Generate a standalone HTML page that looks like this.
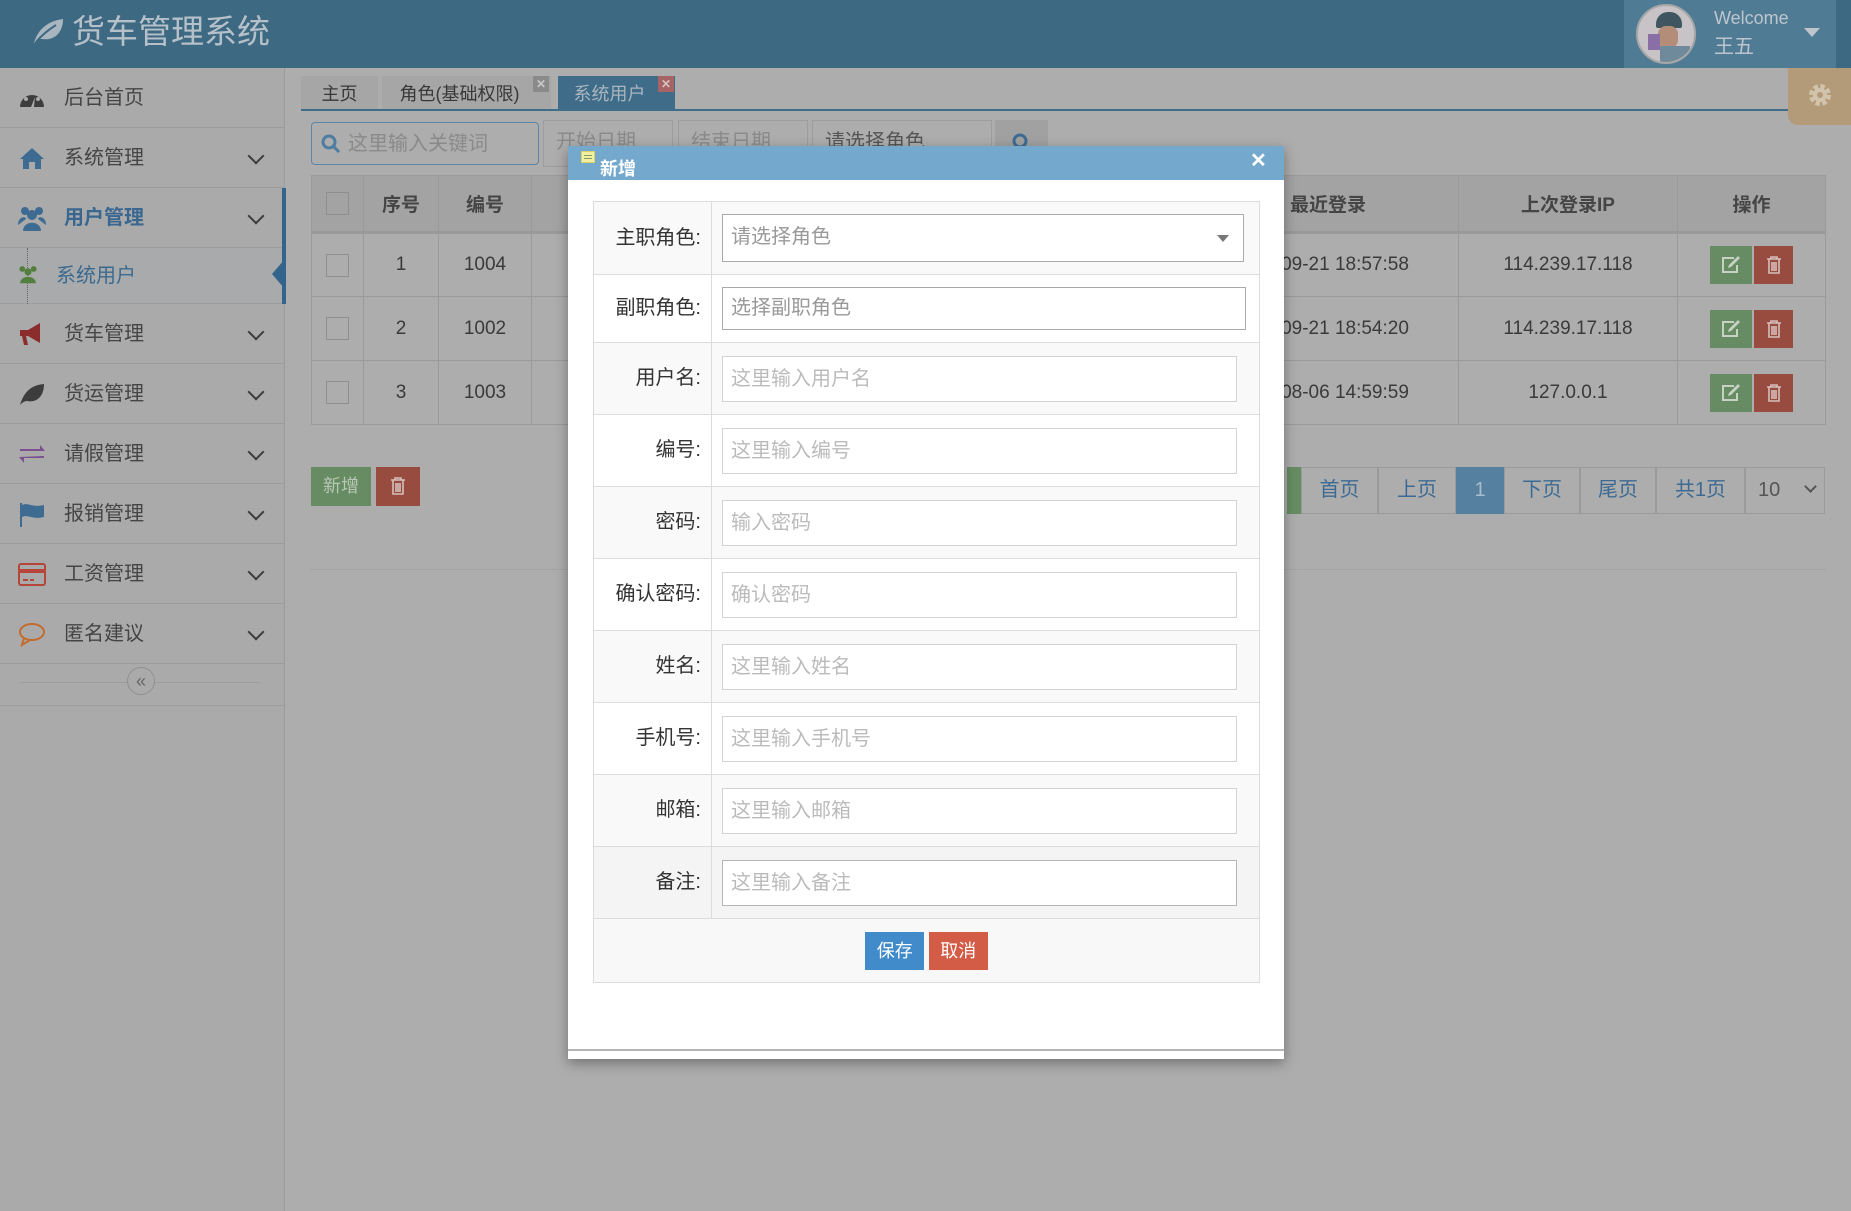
<!DOCTYPE html>
<html><head><meta charset="utf-8"><style>
*{box-sizing:border-box;margin:0;padding:0}
body{width:1851px;height:1211px;position:relative;overflow:hidden;background:#adadad;font-family:"Liberation Sans","Noto Sans CJK SC",sans-serif;color:#3c3c3c}
.a{position:absolute}
.hdr{left:0;top:0;width:1851px;height:68px;background:#3d6983}
.side{left:0;top:68px;width:285px;height:1143px;background:#aaaaaa;border-right:1px solid #9c9c9c}
.si{position:absolute;left:0;width:284px;height:60px;border-bottom:1px solid #9d9d9d;font-size:20px;line-height:60px;color:#454545}
.si .t{position:absolute;left:64px}
.chev{position:absolute;left:250px;top:22px;width:12px;height:12px;border-right:2px solid #3d3d3d;border-bottom:2px solid #3d3d3d;transform:rotate(45deg)}
.ic{position:absolute;left:18px;top:17px;width:28px;height:26px}
.tab{position:absolute;top:76px;height:34px;background:#a6a6a6;font-size:18px;line-height:36px;text-align:center;color:#383838}
.inp{position:absolute;border:1px solid #9d9d9d;background:#adadad;font-size:20px;color:#8a8a8a;line-height:42px;padding-left:12px;overflow:hidden;white-space:nowrap}
table.g{position:absolute;left:311px;top:175px;border-collapse:collapse;font-size:19px;color:#3a3a3a}
table.g td{border:1px solid #9a9a9a;text-align:center;height:64px}
table.g tr.h td{height:57px;background:#a3a3a3;font-weight:bold;color:#454545;border-bottom:3px solid #999}
.cb{display:inline-block;width:23px;height:23px;border:1px solid #8f8f8f;vertical-align:middle}
.bg{display:inline-block;width:42px;height:38px;background:#678c63;vertical-align:middle;position:relative}
.br{display:inline-block;width:39px;height:38px;background:#984b3f;vertical-align:middle;margin-left:2px;position:relative}
.bg svg,.br svg{position:absolute;left:50%;top:50%;transform:translate(-50%,-50%)}
.pg{position:absolute;top:467px;height:47px;border:1px solid #9a9a9a;font-size:20px;line-height:45px;text-align:center;color:#3c6a93}
.modal{left:568px;top:146px;width:716px;height:913px;background:#fff;box-shadow:0 4px 12px rgba(0,0,0,.35)}
.mh{left:0;top:0;width:716px;height:34px;background:#74a9cd;color:#fff;font-weight:bold;font-size:18px}
.frm{position:absolute;left:25px;top:55px;width:667px;border-collapse:collapse}
.frm td{border:1px solid #dcdcdc}
.frm td.l{width:118px;text-align:right;padding-right:10px;font-size:20px;color:#333;padding-bottom:6px}
.frm .fi{border:1px solid #d3d3d3;height:46px;font-size:20px;color:#bbb;line-height:44px;padding-left:8px;width:515px;margin-left:10px;background:#fff}
</style></head><body>
<div class="a hdr">
 <svg class="a" style="left:30px;top:15px" width="36" height="32" viewBox="0 0 36 32"><path d="M4 28 C8 14 18 6 33 4 C33 18 24 26 12 24 C9 24 7 25 4 28 Z" fill="#a9b6bf"/><path d="M6 27 C12 20 18 15 26 10" stroke="#3d6983" stroke-width="2" fill="none"/></svg>
 <div class="a" style="left:72px;top:10px;font-size:33px;color:#b5c0c8;line-height:44px">货车管理系统</div>
 <div class="a" style="left:1624px;top:0;width:212px;height:68px;background:#507b95">
  <div class="a" style="left:12px;top:4px;width:60px;height:60px;border-radius:50%;background:#c7c3c6;border:2px solid #a7a7a7;overflow:hidden"><div class="a" style="left:18px;top:6px;width:26px;height:16px;background:#3f5660;border-radius:12px 12px 2px 2px"></div><div class="a" style="left:20px;top:20px;width:20px;height:22px;background:#b48d78;border-radius:8px"></div><div class="a" style="left:10px;top:28px;width:12px;height:16px;background:#8a6fa6"></div><div class="a" style="left:22px;top:40px;width:30px;height:20px;background:#6f8a9a"></div></div>
  <div class="a" style="left:90px;top:8px;font-size:18px;color:#bdc6cc">Welcome</div>
  <div class="a" style="left:90px;top:30px;font-size:20px;color:#bdc6cc">王五</div>
  <div class="a" style="left:180px;top:28px;width:0;height:0;border-left:8px solid transparent;border-right:8px solid transparent;border-top:9px solid #bdc6cc"></div>
 </div>
</div>
<div class="a side">
 <div class="si" style="top:0"><svg class="ic" viewBox="0 0 28 26"><path d="M2 22 A12 12 0 1 1 26 22 Z" fill="#3d3d3d"/><circle cx="8" cy="14" r="2" fill="#aaa"/><circle cx="14" cy="8" r="2" fill="#aaa"/><circle cx="20" cy="14" r="2" fill="#aaa"/><path d="M13 22 L17 12 L16 22Z" fill="#aaa"/></svg><span class="t">后台首页</span></div>
 <div class="si" style="top:60px"><svg class="ic" viewBox="0 0 28 26"><path d="M14 3 L2 14 L5 14 L5 24 L11 24 L11 17 L17 17 L17 24 L23 24 L23 14 L26 14Z" fill="#3e6b92"/></svg><span class="t">系统管理</span><div class="chev"></div></div>
 <div class="si" style="top:120px"><svg class="ic" viewBox="0 0 28 26"><circle cx="7" cy="6" r="4" fill="#3e6b92"/><circle cx="21" cy="6" r="4" fill="#3e6b92"/><circle cx="14" cy="10" r="5" fill="#3e6b92"/><path d="M5 26 C5 15 23 15 23 26Z" fill="#3e6b92"/><path d="M0 20 C0 11 8 11 8 14Z M28 20 C28 11 20 11 20 14Z" fill="#3e6b92"/></svg><span class="t" style="font-weight:bold;color:#3a6790">用户管理</span><div class="chev"></div></div>
 <div class="si" style="top:180px;height:56px;line-height:56px;background:#a9aaac"><div class="a" style="left:27px;top:0;height:56px;border-left:1px dotted #666"></div><svg class="ic" style="left:18px;top:16px;width:20px;height:20px" viewBox="0 0 28 26"><circle cx="6" cy="6" r="4" fill="#527f3e"/><circle cx="22" cy="6" r="4" fill="#527f3e"/><circle cx="14" cy="10" r="5" fill="#527f3e"/><path d="M3 26 C3 14 25 14 25 26Z" fill="#527f3e"/></svg><span class="t" style="left:56px;color:#3b6a8f">系统用户</span></div>
 <div class="a" style="left:282px;top:120px;width:4px;height:116px;background:#33648c"></div>
 <div class="a" style="left:272px;top:192px;width:0;height:0;border-top:14px solid transparent;border-bottom:14px solid transparent;border-right:12px solid #33648c"></div>
 <div class="si" style="top:236px"><svg class="ic" viewBox="0 0 28 26"><path d="M2 9 L10 9 L22 2 L22 22 L10 15 L8 15 L10 24 L6 24 L4 15 L2 15Z" fill="#8c2d2d"/></svg><span class="t">货车管理</span><div class="chev"></div></div>
 <div class="si" style="top:296px"><svg class="ic" viewBox="0 0 28 26"><path d="M2 24 C6 10 14 4 26 3 C26 16 18 22 9 20 C6 20 4 22 2 24Z" fill="#3d3d3d"/></svg><span class="t">货运管理</span><div class="chev"></div></div>
 <div class="si" style="top:356px"><svg class="ic" viewBox="0 0 28 26"><path d="M2 8 L22 8 L22 4 L27 10 L2 10Z M26 17 L6 17 L6 22 L1 16 L26 15Z" fill="#7d4f91"/></svg><span class="t">请假管理</span><div class="chev"></div></div>
 <div class="si" style="top:416px"><svg class="ic" viewBox="0 0 28 26"><rect x="2" y="2" width="2" height="24" fill="#3e6b92"/><path d="M4 4 C10 1 14 7 26 4 L26 16 C14 19 10 13 4 16Z" fill="#3e6b92"/></svg><span class="t">报销管理</span><div class="chev"></div></div>
 <div class="si" style="top:476px"><svg class="ic" viewBox="0 0 28 26"><rect x="1" y="3" width="26" height="21" rx="2" fill="none" stroke="#b6463a" stroke-width="2"/><rect x="1" y="8" width="26" height="4" fill="#b6463a"/><rect x="5" y="18" width="5" height="2" fill="#b6463a"/><rect x="12" y="18" width="4" height="2" fill="#b6463a"/></svg><span class="t">工资管理</span><div class="chev"></div></div>
 <div class="si" style="top:536px"><svg class="ic" viewBox="0 0 28 26"><ellipse cx="14" cy="11" rx="12" ry="8" fill="none" stroke="#c46b2e" stroke-width="2"/><path d="M6 17 L4 24 L12 19" fill="none" stroke="#c46b2e" stroke-width="2"/></svg><span class="t">匿名建议</span><div class="chev"></div></div>
 <div class="a" style="left:0;top:596px;width:284px;height:42px;border-bottom:1px solid #9d9d9d"><div class="a" style="left:20px;top:18px;width:240px;border-top:1px solid #9b9b9b"></div><div class="a" style="left:127px;top:3px;width:28px;height:28px;border-radius:50%;border:1px solid #8f8f8f;background:#aaa;text-align:center;line-height:26px;font-size:18px;color:#666">«</div></div>
</div>
<div class="tab" style="left:301px;width:77px">主页</div>
<div class="tab" style="left:382px;width:169px;padding-right:14px">角色(基础权限)<div class="a" style="left:151px;top:0;width:16px;height:16px;background:#8a8a8a;color:#c8c8c8;font-size:12px;line-height:16px;font-weight:bold">✕</div></div>
<div class="tab" style="left:558px;width:117px;background:#3f6c89;color:#aab6bf;padding-right:14px">系统用户<div class="a" style="left:100px;top:0;width:16px;height:16px;background:#a76465;color:#d6c0c0;font-size:12px;line-height:16px;font-weight:bold">✕</div></div>
<div class="a" style="left:301px;top:109px;width:1488px;height:2px;background:#3f6c89"></div>
<div class="a" style="left:1788px;top:68px;width:63px;height:57px;background:#b39a78;border-radius:0 0 0 10px"><svg class="a" style="left:19px;top:14px" width="26" height="26" viewBox="0 0 26 26"><circle cx="13" cy="13" r="8" fill="none" stroke="#d2c3ad" stroke-width="6" stroke-dasharray="4 2.3"/><circle cx="13" cy="13" r="7" fill="#d2c3ad"/><circle cx="13" cy="13" r="3" fill="#b39a78"/></svg></div>
<div class="inp" style="left:311px;top:122px;width:228px;height:43px;border:1px solid #5d86a6;border-radius:4px;padding-left:36px"><svg class="a" style="left:9px;top:11px" width="20" height="20" viewBox="0 0 20 20"><circle cx="8" cy="8" r="6" fill="none" stroke="#4f7da0" stroke-width="3"/><path d="M12 12 L18 18" stroke="#4f7da0" stroke-width="3"/></svg>这里输入关键词</div>
<div class="inp" style="left:543px;top:120px;width:130px;height:47px">开始日期</div>
<div class="inp" style="left:678px;top:120px;width:130px;height:47px">结束日期</div>
<div class="inp" style="left:812px;top:120px;width:180px;height:47px;color:#555">请选择角色</div>
<div class="a" style="left:995px;top:120px;width:53px;height:47px;background:#a1a1a1"><svg class="a" style="left:16px;top:12px" width="20" height="20" viewBox="0 0 20 20"><circle cx="9" cy="9" r="6" fill="none" stroke="#3e6b92" stroke-width="3"/></svg></div>
<table class="g">
<tr class="h"><td style="width:52px"><span class="cb"></span></td><td style="width:75px">序号</td><td style="width:93px">编号</td><td style="width:700px"></td><td style="width:227px;text-align:left;padding-left:58px">最近登录</td><td style="width:219px">上次登录IP</td><td style="width:148px">操作</td></tr>
<tr><td><span class="cb"></span></td><td>1</td><td>1004</td><td></td><td>09-21 18:57:58</td><td>114.239.17.118</td><td><span class="bg"><svg width="22" height="20" viewBox="0 0 22 20"><path d="M14 3 H3 V17 H17 V10" fill="none" stroke="#c6d2c2" stroke-width="2"/><path d="M8 13 L9 10 L18 1 L20 3 L11 12Z" fill="#c6d2c2"/></svg></span><span class="br"><svg width="16" height="20" viewBox="0 0 16 20"><path d="M1 4 H15 M5 4 V2 H11 V4 M3 4 V18 H13 V4 M6 7 V16 M8 7 V16 M10 7 V16" fill="none" stroke="#d7c0bb" stroke-width="1.6"/></svg></span></td></tr>
<tr><td><span class="cb"></span></td><td>2</td><td>1002</td><td></td><td>09-21 18:54:20</td><td>114.239.17.118</td><td><span class="bg"><svg width="22" height="20" viewBox="0 0 22 20"><path d="M14 3 H3 V17 H17 V10" fill="none" stroke="#c6d2c2" stroke-width="2"/><path d="M8 13 L9 10 L18 1 L20 3 L11 12Z" fill="#c6d2c2"/></svg></span><span class="br"><svg width="16" height="20" viewBox="0 0 16 20"><path d="M1 4 H15 M5 4 V2 H11 V4 M3 4 V18 H13 V4 M6 7 V16 M8 7 V16 M10 7 V16" fill="none" stroke="#d7c0bb" stroke-width="1.6"/></svg></span></td></tr>
<tr><td><span class="cb"></span></td><td>3</td><td>1003</td><td></td><td>08-06 14:59:59</td><td>127.0.0.1</td><td><span class="bg"><svg width="22" height="20" viewBox="0 0 22 20"><path d="M14 3 H3 V17 H17 V10" fill="none" stroke="#c6d2c2" stroke-width="2"/><path d="M8 13 L9 10 L18 1 L20 3 L11 12Z" fill="#c6d2c2"/></svg></span><span class="br"><svg width="16" height="20" viewBox="0 0 16 20"><path d="M1 4 H15 M5 4 V2 H11 V4 M3 4 V18 H13 V4 M6 7 V16 M8 7 V16 M10 7 V16" fill="none" stroke="#d7c0bb" stroke-width="1.6"/></svg></span></td></tr>
</table>
<div class="a" style="left:311px;top:467px;width:60px;height:39px;background:#678c63;color:#b9c8b5;font-size:18px;line-height:39px;text-align:center">新增</div>
<div class="a" style="left:376px;top:467px;width:44px;height:39px;background:#984b3f"><svg class="a" style="left:14px;top:9px" width="16" height="20" viewBox="0 0 16 20"><path d="M1 4 H15 M5 4 V2 H11 V4 M3 4 V18 H13 V4 M6 7 V16 M8 7 V16 M10 7 V16" fill="none" stroke="#d7c0bb" stroke-width="1.6"/></svg></div>
<div class="a" style="left:311px;top:569px;width:1514px;border-top:1px dotted #999"></div>
<div class="a" style="left:1287px;top:467px;width:14px;height:47px;background:#678c63"></div>
<div class="pg" style="left:1301px;width:77px">首页</div>
<div class="pg" style="left:1378px;width:78px">上页</div>
<div class="pg" style="left:1456px;width:48px;background:#5580a0;color:#a9bccb;border-color:#5580a0">1</div>
<div class="pg" style="left:1504px;width:76px">下页</div>
<div class="pg" style="left:1580px;width:76px">尾页</div>
<div class="pg" style="left:1656px;width:89px">共1页</div>
<div class="pg" style="left:1745px;width:80px;color:#555;text-align:left;padding-left:12px">10<div class="a" style="left:60px;top:14px;width:9px;height:9px;border-right:2px solid #555;border-bottom:2px solid #555;transform:rotate(45deg)"></div></div>

<div class="a modal">
 <div class="a mh"><svg class="a" style="left:13px;top:5px" width="14" height="12" viewBox="0 0 14 12"><rect x="0.5" y="0.5" width="13" height="11" fill="#f2f0a0" stroke="#d8d26a"/><rect x="3" y="4" width="8" height="1" fill="#8a9a60"/><rect x="3" y="7" width="8" height="1" fill="#8a9a60"/></svg><span class="a" style="left:32px;top:9px">新增</span><span class="a" style="left:682px;top:2px;font-size:20px">✕</span></div>
 <table class="frm">
  <tr style="background:#f9f9f9;height:73px"><td class="l">主职角色:</td><td><div class="fi" style="width:522px;height:48px;border-color:#aaa;color:#999;position:relative">请选择角色<div class="a" style="left:494px;top:20px;border-left:6px solid transparent;border-right:6px solid transparent;border-top:7px solid #777"></div></div></td></tr>
  <tr style="height:68px"><td class="l">副职角色:</td><td><div class="fi" style="width:524px;height:43px;line-height:41px;border-color:#aaa;color:#999">选择副职角色</div></td></tr>
  <tr style="background:#f9f9f9;height:72px"><td class="l">用户名:</td><td><div class="fi">这里输入用户名</div></td></tr>
  <tr style="height:72px"><td class="l">编号:</td><td><div class="fi">这里输入编号</div></td></tr>
  <tr style="background:#f9f9f9;height:72px"><td class="l">密码:</td><td><div class="fi">输入密码</div></td></tr>
  <tr style="height:72px"><td class="l">确认密码:</td><td><div class="fi">确认密码</div></td></tr>
  <tr style="background:#f9f9f9;height:72px"><td class="l">姓名:</td><td><div class="fi">这里输入姓名</div></td></tr>
  <tr style="height:72px"><td class="l">手机号:</td><td><div class="fi">这里输入手机号</div></td></tr>
  <tr style="background:#f9f9f9;height:72px"><td class="l">邮箱:</td><td><div class="fi">这里输入邮箱</div></td></tr>
  <tr style="background:#f4f4f4;height:72px"><td class="l">备注:</td><td><div class="fi" style="border-color:#b5b5b5">这里输入备注</div></td></tr>
  <tr style="background:#f8f8f8;height:64px"><td colspan="2" style="text-align:center"><span style="display:inline-block;width:59px;height:38px;background:#418bca;color:#fff;font-size:18px;line-height:38px">保存</span> <span style="display:inline-block;width:59px;height:38px;background:#d35c47;color:#fff;font-size:18px;line-height:38px">取消</span></td></tr>
 </table>
 <div class="a" style="left:0;top:903px;width:716px;border-top:2px solid #b5b5b5"></div>
</div>
</body></html>
